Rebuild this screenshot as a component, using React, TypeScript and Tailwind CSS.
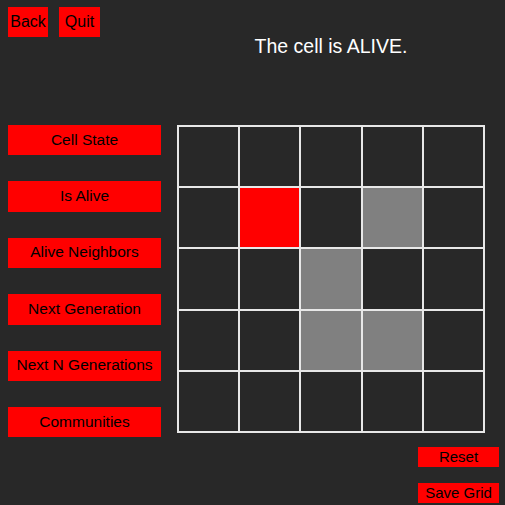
import React from "react";

const font = { fontFamily: '"Liberation Sans", Arial, sans-serif' };

// 0 = empty, 1 = selected (red), 2 = alive (gray)
const cells = [
  [0, 0, 0, 0, 0],
  [0, 1, 0, 2, 0],
  [0, 0, 2, 0, 0],
  [0, 0, 2, 2, 0],
  [0, 0, 0, 0, 0],
];

const actions = [
  "Cell State",
  "Is Alive",
  "Alive Neighbors",
  "Next Generation",
  "Next N Generations",
  "Communities",
];

const App = () => {
  return (
    <div
      className="w-[505px] h-[505px] bg-[#282828] flex overflow-hidden"
      style={font}
    >
      {/* left column */}
      <div className="flex flex-col pl-[8px] pt-[7px] w-[169px]">
        <div className="flex gap-[11px]">
          <button className="h-[30px] w-[40px] bg-[#ff0000] text-black text-[16px] flex items-center justify-center">
            Back
          </button>
          <button className="h-[30px] w-[41px] bg-[#ff0000] text-black text-[16px] flex items-center justify-center">
            Quit
          </button>
        </div>
        <div className="flex flex-col gap-[26px] mt-[88px]">
          {actions.map((a) => (
            <button
              key={a}
              className="h-[30.4px] w-[153px] bg-[#ff0000] text-black text-[15.5px] flex items-center justify-center pb-[2px]"
            >
              {a}
            </button>
          ))}
        </div>
      </div>

      {/* right column */}
      <div className="flex flex-col ml-[8px] pt-[35px]">
        <div className="w-[308px] text-center text-white text-[19.5px] leading-[22px]">
          The cell is ALIVE.
        </div>
        <div className="mt-[68px] w-[308px] h-[308px] border-l-2 border-t-2 border-[#e8e8e8] grid grid-cols-5 grid-rows-5">
          {cells.flat().map((c, i) => (
            <div
              key={i}
              className={
                "border-r-2 border-b-2 border-[#e8e8e8] " +
                (c === 1 ? "bg-[#ff0000]" : c === 2 ? "bg-[#808080]" : "")
              }
            />
          ))}
        </div>
        <div className="flex flex-col items-end gap-[16px] mt-[14px] -mr-[14px]">
          <button className="h-[20px] w-[81px] bg-[#ff0000] text-black text-[15px] flex items-center justify-center">
            Reset
          </button>
          <button className="h-[20px] w-[81px] bg-[#ff0000] text-black text-[15px] flex items-center justify-center">
            Save Grid
          </button>
        </div>
      </div>
    </div>
  );
};

export default App;
